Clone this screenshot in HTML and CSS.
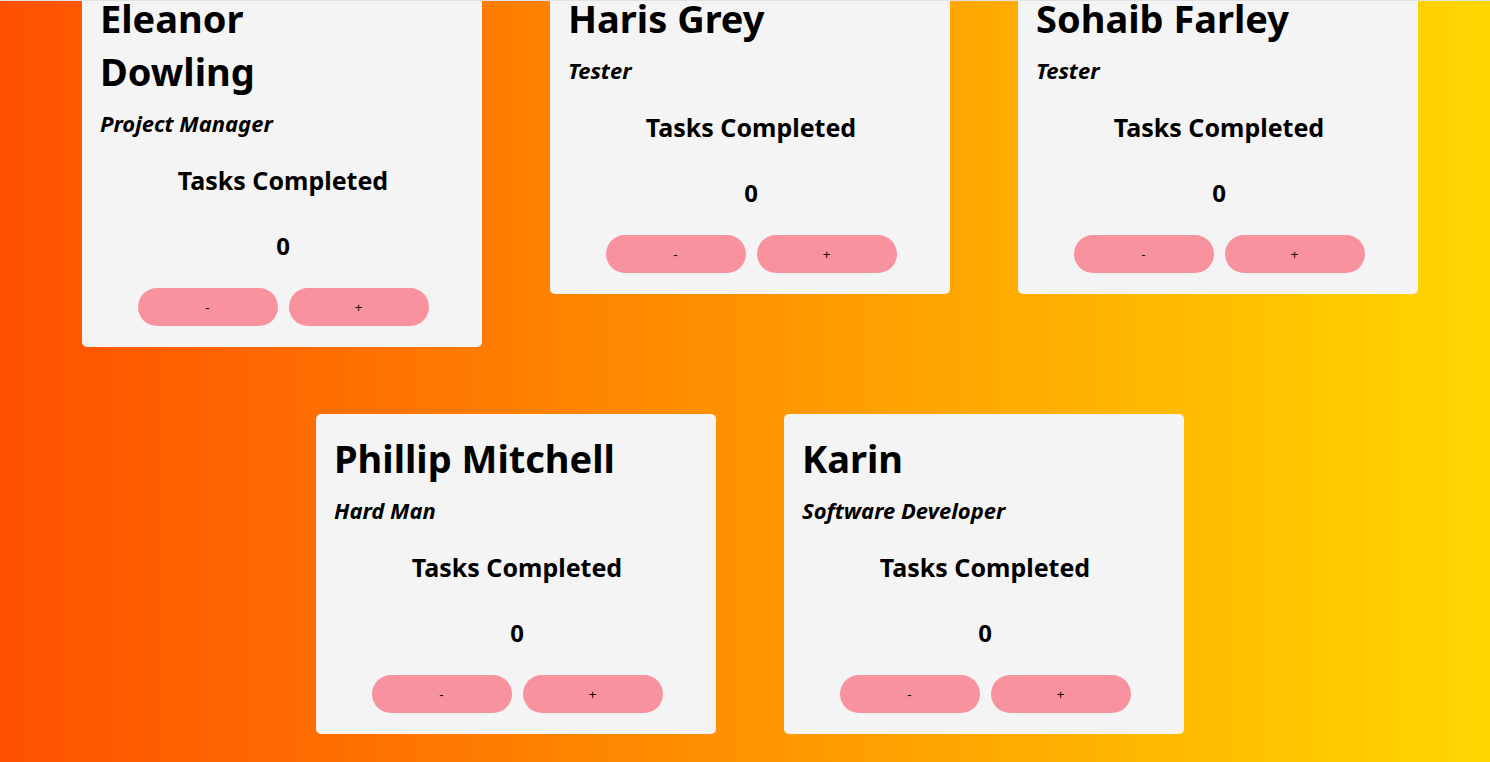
FILE: index.html
```html
<!DOCTYPE html>
<html lang="en">
<head>
<meta charset="utf-8">
<title>Team Tasks</title>
<link rel="stylesheet" href="styles.css">
</head>
<body>
<div class="topline"></div>
<main class="board">
  <section class="card">
    <h1 class="name">Eleanor<br>Dowling</h1>
    <h3 class="role">Project Manager</h3>
    <h2 class="label">Tasks Completed</h2>
    <h2 class="count">0</h2>
    <div class="actions"><button class="btn">-</button><button class="btn">+</button></div>
  </section>
  <section class="card">
    <h1 class="name">Haris Grey</h1>
    <h3 class="role">Tester</h3>
    <h2 class="label">Tasks Completed</h2>
    <h2 class="count">0</h2>
    <div class="actions"><button class="btn">-</button><button class="btn">+</button></div>
  </section>
  <section class="card">
    <h1 class="name">Sohaib Farley</h1>
    <h3 class="role">Tester</h3>
    <h2 class="label">Tasks Completed</h2>
    <h2 class="count">0</h2>
    <div class="actions"><button class="btn">-</button><button class="btn">+</button></div>
  </section>
  <section class="card">
    <h1 class="name">Phillip Mitchell</h1>
    <h3 class="role">Hard Man</h3>
    <h2 class="label">Tasks Completed</h2>
    <h2 class="count">0</h2>
    <div class="actions"><button class="btn">-</button><button class="btn">+</button></div>
  </section>
  <section class="card">
    <h1 class="name">Karin</h1>
    <h3 class="role">Software Developer</h3>
    <h2 class="label">Tasks Completed</h2>
    <h2 class="count">0</h2>
    <div class="actions"><button class="btn">-</button><button class="btn">+</button></div>
  </section>
</main>
</body>
</html>
```
FILE: styles.css
```css
html {
  min-height: 100%;
  background: linear-gradient(90deg, #ff5000 0%, #ffd700 100%);
}
body {
  margin: 0;
  font-family: "Noto Sans", "Open Sans", sans-serif;
  color: #000;
}
.topline {
  position: fixed;
  top: 0;
  left: 0;
  right: 0;
  height: 1px;
  background: #e2e2e2;
  z-index: 5;
}
.board {
  display: flex;
  flex-wrap: wrap;
  justify-content: center;
  align-items: flex-start;
  column-gap: 68px;
  row-gap: 67px;
  padding-left: 10px;
  margin-top: -26px;
}
.card {
  width: 400px;
  box-sizing: border-box;
  background: #f4f4f4;
  border-radius: 5px;
  padding: 18px 16px 21px 18px;
  display: flex;
  flex-direction: column;
}
.name {
  margin: 0;
  font-size: 38px;
  line-height: 53px;
  font-weight: 700;
}
.role {
  margin: 12px 0 0;
  font-size: 22px;
  line-height: 27px;
  font-style: italic;
  font-weight: 700;
}
.label {
  margin: 27px 0 0;
  font-size: 25px;
  line-height: 32px;
  font-weight: 700;
  text-align: center;
}
.count {
  margin: 34px 0 0;
  font-size: 24px;
  line-height: 32px;
  font-weight: 700;
  text-align: center;
}
.actions {
  margin-top: 26px;
  display: flex;
  justify-content: center;
  gap: 11px;
}
.btn {
  width: 140px;
  height: 38px;
  border: none;
  border-radius: 19px;
  background: #f8929f;
  color: #000;
  font-family: "Liberation Sans", Arial, sans-serif;
  font-size: 13px;
  padding: 0;
  cursor: pointer;
}
```
